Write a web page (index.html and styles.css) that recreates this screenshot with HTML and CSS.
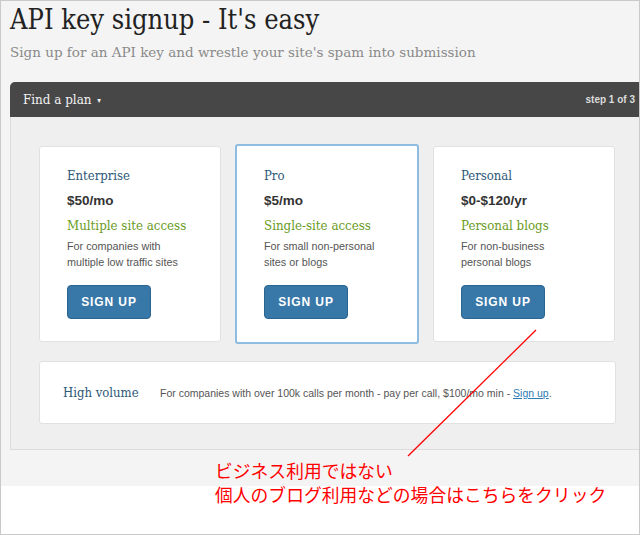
FILE: index.html
```html
<!DOCTYPE html>
<html lang="ja">
<head>
  <meta charset="UTF-8">
  <title>API key signup</title>
  <link rel="stylesheet" href="styles.css">
</head>
<body>
  <div class="frame">
    <div class="page">
      <h1>API key signup - It's easy</h1>
      <p class="lead">Sign up for an API key and wrestle your site's spam into submission</p>

      <div class="panel">
        <div class="panel-head">
          <span class="panel-title">Find a plan <span class="caret">&#9662;</span></span>
          <span class="step">step 1 of 3</span>
        </div>
        <div class="panel-body">
          <div class="plans">
            <div class="plan">
              <h3>Enterprise</h3>
              <div class="price">$50/mo</div>
              <h4>Multiple site access</h4>
              <p>For companies with<br>multiple low traffic sites</p>
              <a class="btn" href="#">SIGN UP</a>
            </div>
            <div class="plan selected">
              <h3>Pro</h3>
              <div class="price">$5/mo</div>
              <h4>Single-site access</h4>
              <p>For small non-personal<br>sites or blogs</p>
              <a class="btn" href="#">SIGN UP</a>
            </div>
            <div class="plan">
              <h3>Personal</h3>
              <div class="price">$0-$120/yr</div>
              <h4>Personal blogs</h4>
              <p>For non-business<br>personal blogs</p>
              <a class="btn" href="#">SIGN UP</a>
            </div>
          </div>
          <div class="volume">
            <h3>High volume</h3>
            <p>For companies with over 100k calls per month - pay per call, $100/mo min - <a href="#">Sign up</a>.</p>
          </div>
        </div>
      </div>
    </div>

    <svg class="arrow" width="640" height="535" viewBox="0 0 640 535">
      <line x1="536" y1="330" x2="408" y2="456" stroke="#ff0000" stroke-width="1.3"/>
    </svg>
    <div class="note">
      <div>ビジネス利用ではない</div>
      <div>個人のブログ利用などの場合はこちらをクリック</div>
    </div>
  </div>
</body>
</html>
```

FILE: styles.css
```css
* {
  margin: 0;
  padding: 0;
  box-sizing: border-box;
}
body {
  font-family: 'Liberation Sans', Arial, sans-serif;
  background-color: white;
}
.frame {
  position: relative;
  width: 640px;
  height: 535px;
  border: 1px solid #c9c9c9;
  background-color: white;
  overflow: hidden;
}
.page {
  height: 485px;
  background-color: #f4f4f4;
  padding: 1px 0 0 9px;
}
h1 {
  font-family: 'DejaVu Serif', serif;
  font-stretch: condensed;
  font-weight: normal;
  font-size: 27px;
  line-height: 36px;
  color: #222;
}
.lead {
  font-family: 'DejaVu Serif', serif;
  font-size: 13.5px;
  line-height: 18px;
  color: #8a8a8a;
  margin-top: 5px;
}
.panel {
  margin-top: 21px;
  width: 640px;
}
.panel-head {
  height: 35px;
  background-color: #474747;
  border-top-left-radius: 5px;
  display: flex;
  align-items: center;
  justify-content: space-between;
  padding: 0 15px 0 13px;
}
.panel-title {
  font-family: 'DejaVu Serif', serif;
  font-stretch: condensed;
  font-size: 13.3px;
  color: #f2f2f2;
}
.caret {
  font-size: 8px;
  margin-left: 2px;
  vertical-align: 1px;
}
.step {
  font-size: 10px;
  font-weight: bold;
  color: #dcdcdc;
}
.panel-body {
  background-color: #efefef;
  border: 1px solid #dcdcdc;
  border-top: none;
  padding: 29px 0 25px 28px;
}
.plans {
  display: grid;
  grid-template-columns: repeat(3, 182px);
  gap: 15px;
  width: 577px;
}
.plan {
  background-color: white;
  border: 1px solid #e1e1e1;
  border-radius: 3px;
  padding: 21px 20px 22px 27px;
}
.plan.selected {
  border: 2px solid #8dbce0;
  margin: -2px -1px;
  padding: 22px 20px 22px 27px;
}
.plan h3, .volume h3 {
  font-family: 'DejaVu Serif', serif;
  font-stretch: condensed;
  font-weight: normal;
  font-size: 13px;
  line-height: 16px;
  color: #2d5878;
}
.price {
  font-size: 13.5px;
  line-height: 18px;
  font-weight: bold;
  color: #333;
  margin-top: 8px;
}
.plan h4 {
  font-family: 'DejaVu Serif', serif;
  font-stretch: condensed;
  font-weight: normal;
  font-size: 13.2px;
  line-height: 16px;
  color: #6a9b1e;
  margin-top: 8px;
}
.plan p {
  font-size: 10.8px;
  line-height: 16px;
  color: #555;
  margin-top: 4px;
}
.btn {
  display: block;
  margin-top: 15px;
  width: 84px;
  height: 34px;
  line-height: 32px;
  text-align: center;
  background-color: #3878a8;
  border: 1px solid #2a6591;
  border-radius: 4px;
  color: white;
  font-size: 12px;
  font-weight: bold;
  letter-spacing: 0.9px;
  text-decoration: none;
}
.volume {
  margin-top: 19px;
  width: 577px;
  height: 63px;
  background-color: white;
  border: 1px solid #e1e1e1;
  border-radius: 3px;
  display: flex;
  align-items: center;
  padding-left: 23px;
}
.volume h3 {
  width: 97px;
}
.volume p {
  font-size: 10.5px;
  color: #555;
}
.volume a {
  color: #2e7ab2;
}
.arrow {
  position: absolute;
  left: -1px;
  top: -1px;
}
.note {
  position: absolute;
  left: 214px;
  top: 457px;
  font-family: 'Noto Sans CJK JP', sans-serif;
  font-size: 17.8px;
  color: #ff0000;
}
.note div {
  height: 24px;
  line-height: 24px;
}
```
